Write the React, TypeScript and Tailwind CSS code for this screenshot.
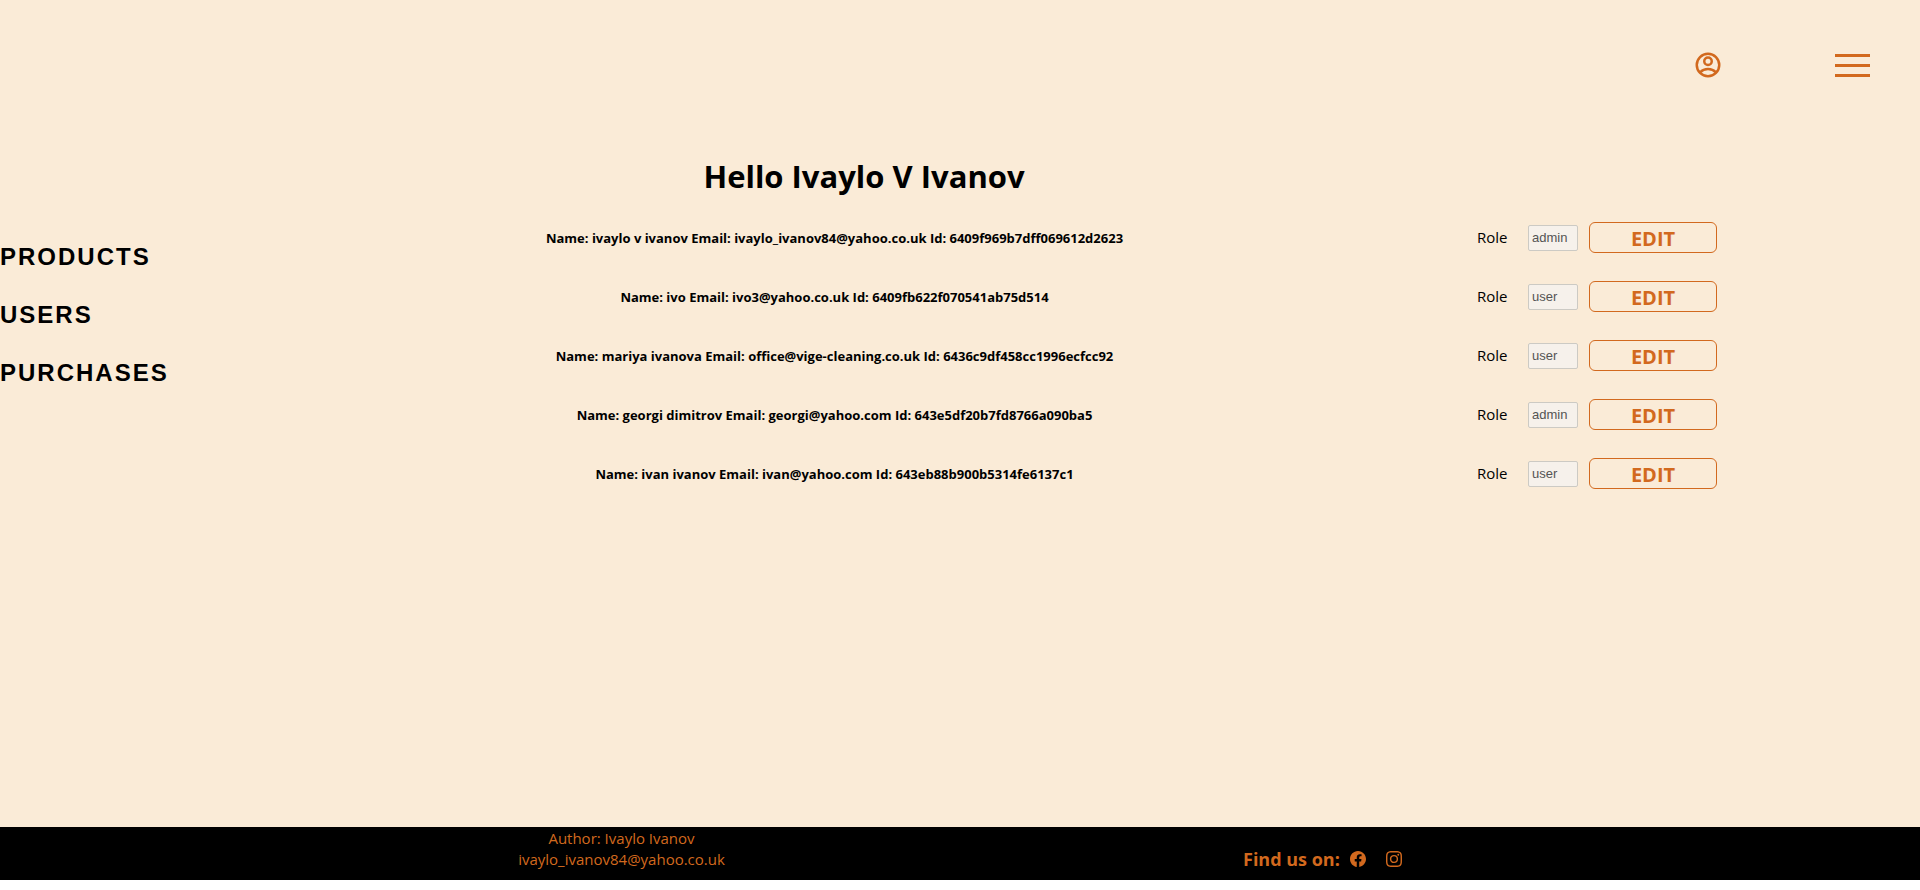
import { BsFacebook, BsInstagram } from "react-icons/bs";

type User = { id: string; name: string; email: string; role: string };

const users: User[] = [
  { id: "6409f969b7dff069612d2623", name: "ivaylo v ivanov", email: "ivaylo_ivanov84@yahoo.co.uk", role: "admin" },
  { id: "6409fb622f070541ab75d514", name: "ivo", email: "ivo3@yahoo.co.uk", role: "user" },
  { id: "6436c9df458cc1996ecfcc92", name: "mariya ivanova", email: "office@vige-cleaning.co.uk", role: "user" },
  { id: "643e5df20b7fd8766a090ba5", name: "georgi dimitrov", email: "georgi@yahoo.com", role: "admin" },
  { id: "643eb88b900b5314fe6137c1", name: "ivan ivanov", email: "ivan@yahoo.com", role: "user" },
];

const links = ["PRODUCTS", "USERS", "PURCHASES"];

function AccountIcon() {
  return (
    <svg viewBox="0 0 24 24" fill="none" stroke="currentColor" strokeWidth="2" className="size-[30px]" aria-hidden="true">
      <circle cx="12" cy="12" r="9" />
      <circle cx="12" cy="9" r="3" />
      <path d="M5.6 18a8.9 8.9 0 0 1 12.8 0" />
    </svg>
  );
}

function Header() {
  return (
    <header className="flex h-[130px] items-center justify-end gap-28 pr-[50px] text-[#d2691e]">
      <a href="#account" aria-label="Account">
        <AccountIcon />
      </a>
      <button type="button" aria-label="Menu" className="flex w-[35px] flex-col gap-[7px]">
        <span className="h-[3px] w-full bg-[#d2691e]" />
        <span className="h-[3px] w-full bg-[#d2691e]" />
        <span className="h-[3px] w-full bg-[#d2691e]" />
      </button>
    </header>
  );
}

function UserRow({ user }: { user: User }) {
  return (
    <li className="flex h-[31px] items-center">
      <h5 className="flex-1 pt-0.5 text-center text-[13px] font-bold">
        Name: {user.name} Email: {user.email} Id: {user.id}
      </h5>
      <label htmlFor={user.id} className="w-[51px] text-[15px]">
        Role
      </label>
      <input
        id={user.id}
        disabled
        defaultValue={user.role}
        className="mr-[11px] h-[26px] w-[50px] rounded-xs border border-[#cccac4] bg-[#f6f1eb] px-[3px] font-['Liberation_Sans',sans-serif] text-[13px] text-[#545454]"
      />
      <button
        type="button"
        className="h-[31px] w-32 rounded-md border border-[#d2691e] pt-0.5 text-xl leading-none font-bold text-[#d2691e]"
      >
        EDIT
      </button>
    </li>
  );
}

function Footer() {
  return (
    <footer className="flex h-[53px] justify-evenly bg-black text-[#d2691e]">
      <address className="pt-px text-center text-[15px] leading-[21px] not-italic">
        <p>Author: Ivaylo Ivanov</p>
        <p>ivaylo_ivanov84@yahoo.co.uk</p>
      </address>
      <div className="flex items-center pt-[10px]">
        <h3 className="mr-[10px] text-lg font-bold">Find us on:</h3>
        <a href="#facebook" aria-label="Facebook" className="mr-5">
          <BsFacebook size={16} />
        </a>
        <a href="#instagram" aria-label="Instagram">
          <BsInstagram size={16} />
        </a>
      </div>
    </footer>
  );
}

export default function App() {
  return (
    <div className="flex min-h-[calc(100vh-10px)] flex-col bg-[#faebd7] font-['Open_Sans','Noto_Sans',sans-serif] text-black">
      <Header />
      <div className="flex flex-1">
        <nav className="flex w-[10%] flex-col gap-[22px] pt-[109px] font-['Liberation_Sans',sans-serif] text-2xl leading-9 font-bold tracking-[2px]">
          {links.map((link) => (
            <a key={link} href={"#" + link.toLowerCase()}>
              {link}
            </a>
          ))}
        </nav>
        <main className="w-[80%] pt-[25px]">
          <h1 className="pr-48 text-center text-[31px] leading-[43px] font-bold">Hello Ivaylo V Ivanov</h1>
          <ul className="mt-6 flex flex-col gap-7 pr-[11px]">
            {users.map((user) => (
              <UserRow key={user.id} user={user} />
            ))}
          </ul>
        </main>
      </div>
      <Footer />
    </div>
  );
}
